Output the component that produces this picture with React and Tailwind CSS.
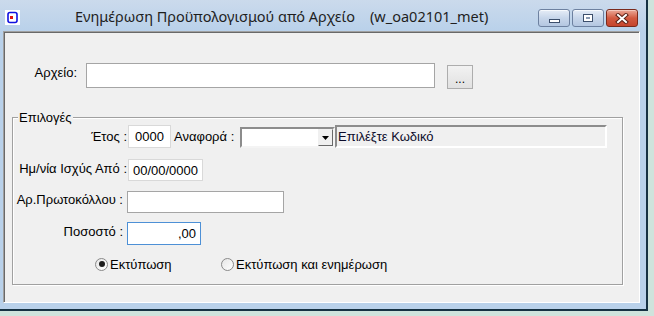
import React from "react";

function WinButton({ kind }) {
  if (kind === "close") {
    return (
      <div className="w-[32px] h-[18px] rounded-[3px] border border-[#7a2a1c] bg-gradient-to-b from-[#eaa898] via-[#d25a41] to-[#c5442c] shadow-[inset_0_1px_0_#f4c7bb] flex items-center justify-center">
        <svg width="14" height="11" viewBox="0 0 14 11">
          <path d="M3 2 L11 9 M11 2 L3 9" stroke="#5a2016" strokeWidth="4" strokeLinecap="square" />
          <path d="M3 2 L11 9 M11 2 L3 9" stroke="#ffffff" strokeWidth="2" strokeLinecap="square" />
        </svg>
      </div>
    );
  }
  return (
    <div className="w-[32px] h-[18px] rounded-[3px] border border-[#6d81a0] bg-gradient-to-b from-[#e6edf7] via-[#c7d6ea] to-[#b4c7e1] shadow-[inset_0_1px_0_#f6f9fd] flex items-center justify-center">
      {kind === "min" ? (
        <div className="w-[11px] h-[4px] mt-[5px] border border-[#3c4f6c] bg-white" />
      ) : (
        <div className="w-[10px] h-[8px] border border-[#3c4f6c] bg-white flex items-center justify-center">
          <div className="w-[4px] h-[2px] bg-[#8a9ab2]" />
        </div>
      )}
    </div>
  );
}

function Radio({ checked, label }) {
  return (
    <div className="flex items-center">
      <div className="w-[13px] h-[13px] rounded-full border border-[#8a8a8a] bg-gradient-to-br from-[#e6e6e6] to-[#ffffff] flex items-center justify-center">
        {checked && <div className="w-[6px] h-[6px] rounded-full bg-[#1c1c1c]" />}
      </div>
      <span className="ml-[2px]">{label}</span>
    </div>
  );
}

export default function App() {
  const font = { fontFamily: '"Liberation Sans", Arial, sans-serif' };
  return (
    <div className="w-[654px] h-[316px] bg-[#cfe3dc] overflow-hidden">
      <div className="w-[648px] h-[311px] bg-[#b9d1ea] border-r-2 border-b-2 border-[#163142] flex flex-col">
        {/* title bar */}
        <div className="h-[31px] flex items-start bg-gradient-to-b from-[#cbdaec] to-[#b9d1ea]">
          <svg width="15" height="15" viewBox="0 0 15 15" className="ml-[5px] mt-[10px]">
            <rect x="0" y="0" width="15" height="15" fill="#ffffff" />
            <rect x="3" y="2.5" width="9" height="10" rx="2" fill="none" stroke="#1010e0" strokeWidth="1.6" />
            <rect x="5" y="6" width="3" height="3" fill="#e01010" />
          </svg>
          <span
            className="ml-[55px] mt-[7px] text-[14.5px] leading-[18px] text-[#1e1e1e] whitespace-pre"
            style={{ fontFamily: '"Noto Sans", "Open Sans", sans-serif' }}
          >
            {"Ενημέρωση Προϋπολογισμού από Αρχείο    (w_oa02101_met)"}
          </span>
          <div className="ml-auto mr-[8px] mt-[9px] flex gap-[2px]">
            <WinButton kind="min" />
            <WinButton kind="max" />
            <WinButton kind="close" />
          </div>
        </div>

        {/* client area */}
        <div
          className="ml-[3px] w-[637px] h-[272px] bg-[#f0f0f0] border border-t-[#a0a0a0] border-l-[#a0a0a0] border-r-white border-b-white shadow-[inset_1px_1px_0_#696969] text-[13px] leading-[15px] text-black flex flex-col"
          style={font}
        >
          {/* file row */}
          <div className="mt-[31px] flex items-start">
            <div className="w-[73px] pt-[2px] text-right">Αρχείο:</div>
            <div className="ml-[9px] w-[349px] h-[25px] bg-white border border-[#a5a5a5]" />
            <button className="ml-[12px] mt-[2px] w-[26px] h-[24px] border border-[#adadad] bg-gradient-to-b from-[#f2f2f2] to-[#e1e1e1] flex items-end justify-center pb-[5px] text-[12px] leading-[8px]">
              ...
            </button>
          </div>

          {/* options group */}
          <div className="relative ml-[8px] mt-[28px] w-[611px] h-[168px] border border-[#a0a0a0] shadow-[1px_1px_0_#ffffff,inset_1px_1px_0_#ffffff] flex flex-col">
            <span className="absolute left-[5px] top-[-8px] px-[1px] bg-[#f0f0f0]">Επιλογές</span>

            <div className="mt-[6px] h-[25px] flex items-center">
              <div className="w-[114px] text-right">Έτος :</div>
              <div className="ml-[1px] w-[43px] h-[23px] bg-white border border-[#d9d9d9] flex items-center justify-center">
                0000
              </div>
              <div className="ml-[3px] w-[66px] whitespace-nowrap">Αναφορά :</div>
              <div className="mt-[2px] w-[95px] h-[21px] bg-white border-2 border-t-[#8c8c8c] border-l-[#8c8c8c] border-r-[#f4f4f4] border-b-[#f4f4f4] flex justify-end">
                <div className="w-[15px] h-[17px] bg-[#f0f0f0] border border-t-[#f0f0f0] border-l-[#f0f0f0] border-r-[#696969] border-b-[#696969] flex items-center justify-center">
                  <svg width="7" height="4" viewBox="0 0 7 4">
                    <path d="M0 0 H7 L3.5 4 Z" fill="#000" />
                  </svg>
                </div>
              </div>
              <div className="w-[272px] h-[23px] bg-[#f0f0f0] border-2 border-t-[#8c8c8c] border-l-[#8c8c8c] border-r-white border-b-white pl-[1px] flex items-center text-[#0b0b2a]">
                Επιλέξτε Κωδικό
              </div>
            </div>

            <div className="mt-[10px] h-[22px] flex items-center">
              <div className="w-[114px] mb-[3px] text-right whitespace-nowrap">Ημ/νία Ισχύς Από :</div>
              <div className="ml-[1px] w-[75px] h-[22px] bg-white border border-[#d9d9d9] flex items-center justify-center">
                00/00/0000
              </div>
            </div>

            <div className="mt-[10px] h-[22px] flex items-center">
              <div className="w-[110px] mb-[5px] text-right whitespace-nowrap">Αρ.Πρωτοκόλλου :</div>
              <div className="ml-[4px] w-[157px] h-[22px] bg-white border border-[#a5a5a5]" />
            </div>

            <div className="mt-[9px] h-[23px] flex items-center">
              <div className="w-[110px] mb-[5px] text-right whitespace-nowrap">Ποσοστό :</div>
              <div className="ml-[4px] w-[74px] h-[23px] bg-white border border-[#4d90d6] flex items-center justify-end pr-[4px]">
                ,00
              </div>
            </div>

            <div className="mt-[11px] h-[16px] flex items-center">
              <div className="ml-[82px] w-[126px]">
                <Radio checked label="Εκτύπωση" />
              </div>
              <Radio label="Εκτύπωση και ενημέρωση" />
            </div>
          </div>
        </div>
      </div>
    </div>
  );
}
